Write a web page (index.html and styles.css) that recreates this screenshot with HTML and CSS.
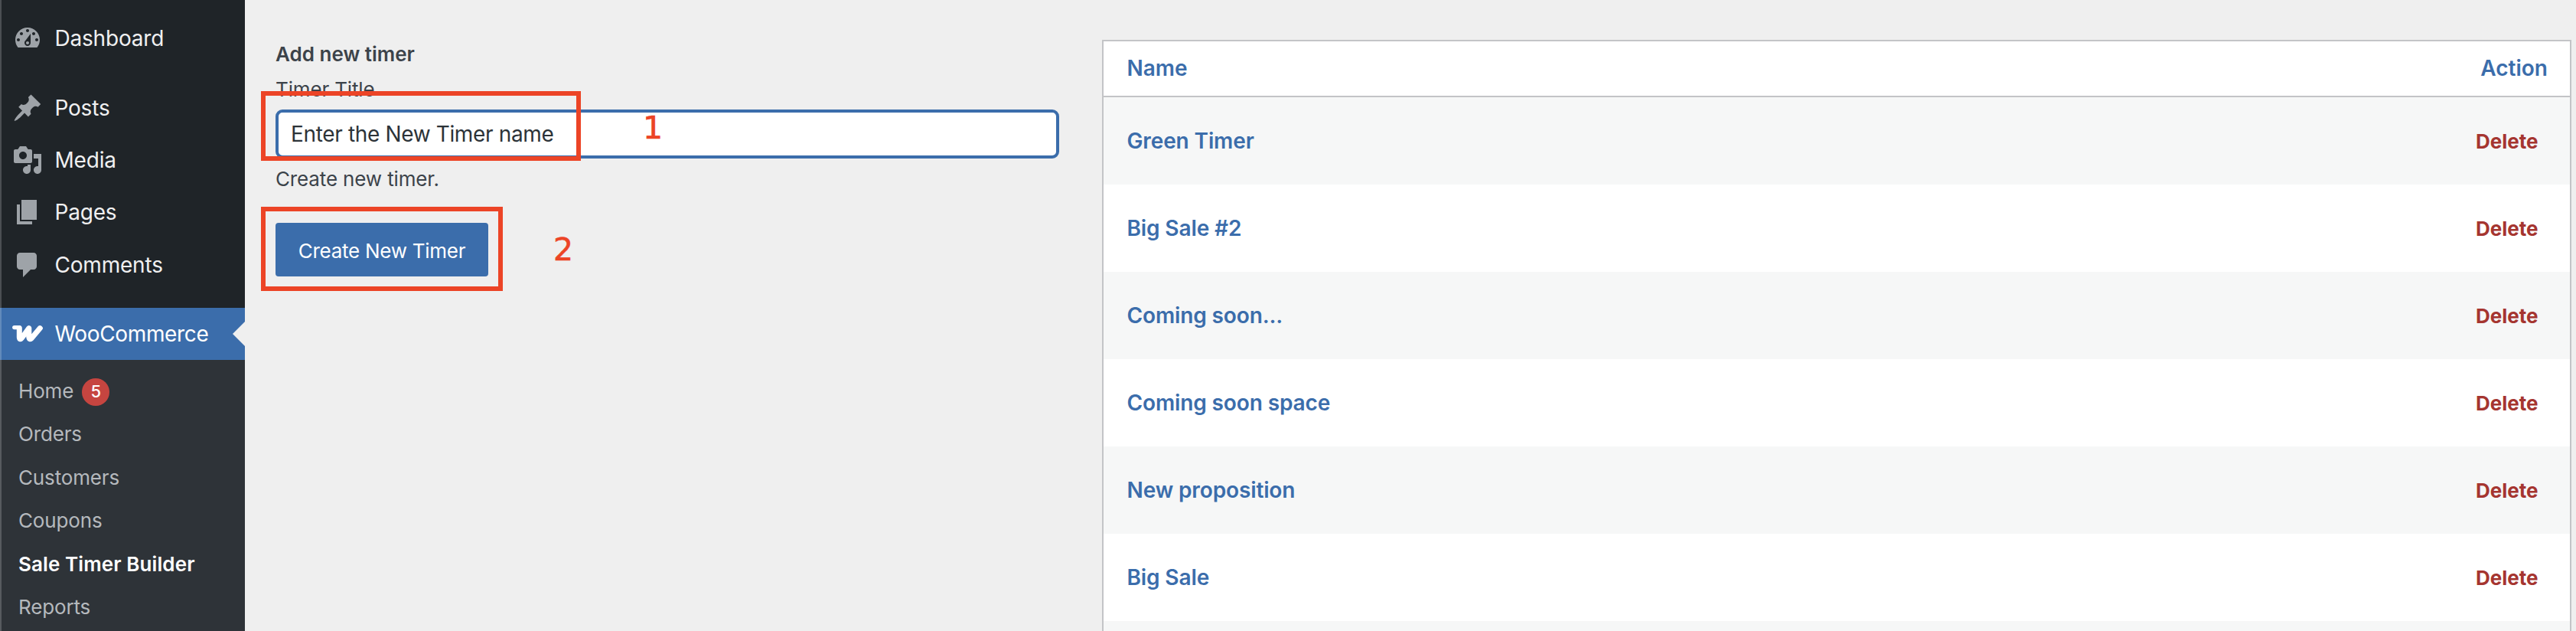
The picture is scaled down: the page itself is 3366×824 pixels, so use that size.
FILE: index.html
```html
<!DOCTYPE html>
<html lang="en">
<head>
    <meta charset="UTF-8">
    <meta name="viewport" content="width=device-width, initial-scale=1.0">
    <title>Sale Timer Builder</title>
    <link rel="stylesheet" href="styles.css">
</head>
<body>
    <aside class="sidebar">
        <ul class="menu">
            <li class="menu-item">
                <svg class="menu-icon" viewBox="0 0 20 20"><path d="M3.76 16h12.48c1.1-1.37 1.76-3.11 1.76-5 0-4.42-3.58-8-8-8s-8 3.58-8 8c0 1.89.66 3.63 1.76 5zM10 4c.55 0 1 .45 1 1s-.45 1-1 1-1-.45-1-1 .45-1 1-1zM6 6c.55 0 1 .45 1 1s-.45 1-1 1-1-.45-1-1 .45-1 1-1zm8 0c.55 0 1 .45 1 1s-.45 1-1 1-1-.45-1-1 .45-1 1-1zm-5.37 5.55L12 7v6c0 1.1-.9 2-2 2s-2-.9-2-2c0-.57.24-1.08.63-1.45zM4 10c.55 0 1 .45 1 1s-.45 1-1 1-1-.45-1-1 .45-1 1-1zm12 0c.55 0 1 .45 1 1s-.45 1-1 1-1-.45-1-1 .45-1 1-1zm-5 3c0-.55-.45-1-1-1s-1 .45-1 1 .45 1 1 1 1-.45 1-1z"/></svg>
                <span>Dashboard</span>
            </li>
            <li class="separator"></li>
            <li class="menu-item">
                <svg class="menu-icon" viewBox="0 0 20 20"><path d="M10.44 3.02l1.82-1.82 6.36 6.35-1.83 1.82c-1.05-.68-2.48-.57-3.41.36l-.75.75c-.92.93-1.04 2.35-.35 3.41l-1.83 1.82-2.41-2.41-2.8 2.79c-.42.42-3.38 2.71-3.8 2.29s1.86-3.39 2.28-3.81l2.79-2.79L4.1 9.36l1.83-1.82c1.05.69 2.48.57 3.4-.36l.75-.75c.93-.92 1.05-2.35.36-3.41z"/></svg>
                <span>Posts</span>
            </li>
            <li class="menu-item">
                <svg class="menu-icon" viewBox="0 0 20 20"><path d="M13 11V4c0-.55-.45-1-1-1h-1.67L9 1H5L3.67 3H2c-.55 0-1 .45-1 1v7c0 .55.45 1 1 1h10c.55 0 1-.45 1-1zM7 4.5c1.38 0 2.5 1.12 2.5 2.5S8.38 9.5 7 9.5 4.5 8.38 4.5 7 5.62 4.5 7 4.5zM14 6h5v10.5c0 1.38-1.12 2.5-2.5 2.5S14 17.88 14 16.5s1.12-2.5 2.5-2.5c.17 0 .34.02.5.05V9h-3V6zm-4 8.05V13h2v3.5c0 1.38-1.12 2.5-2.5 2.5S7 17.88 7 16.5 8.12 14 9.5 14c.17 0 .34.02.5.05z"/></svg>
                <span>Media</span>
            </li>
            <li class="menu-item">
                <svg class="menu-icon" viewBox="0 0 20 20"><path d="M6 15V2h10v13H6zm-1 1h8v2H3V5h2v11z"/></svg>
                <span>Pages</span>
            </li>
            <li class="menu-item">
                <svg class="menu-icon" viewBox="0 0 20 20"><path d="M5 2h9c1.1 0 2 .9 2 2v7c0 1.1-.9 2-2 2h-2l-5 5v-5H5c-1.1 0-2-.9-2-2V4c0-1.1.9-2 2-2z"/></svg>
                <span>Comments</span>
            </li>
            <li class="separator"></li>
            <li class="menu-item current">
                <svg class="menu-icon" viewBox="0 0 40 40">
                    <path class="woo woo-bar" d="M2.8 11.6H9"/>
                    <path class="woo" d="M9.3 12.6V24.5Q9.8 28.5 12.4 25.5L21.8 12.6V24.5Q22.6 28.5 25.4 25.5L36.3 12.6"/>
                </svg>
                <span>WooCommerce</span>
            </li>
        </ul>
        <ul class="submenu">
            <li>Home <span class="badge">5</span></li>
            <li>Orders</li>
            <li>Customers</li>
            <li>Coupons</li>
            <li class="active">Sale Timer Builder</li>
            <li>Reports</li>
        </ul>
    </aside>

    <main class="content">
        <form class="timer-form">
            <h2>Add new timer</h2>
            <label for="title">Timer Title</label>
            <input class="field" type="text" id="title" name="title" value="Enter the New Timer name">
            <p>Create new timer.</p>
            <button type="button">Create New Timer</button>
        </form>

        <div class="timers">
            <div class="row head"><span>Name</span><span>Action</span></div>
            <div class="row"><span class="name">Green Timer</span><span class="delete">Delete</span></div>
            <div class="row"><span class="name">Big Sale #2</span><span class="delete">Delete</span></div>
            <div class="row"><span class="name">Coming soon...</span><span class="delete">Delete</span></div>
            <div class="row"><span class="name">Coming soon space</span><span class="delete">Delete</span></div>
            <div class="row"><span class="name">New proposition</span><span class="delete">Delete</span></div>
            <div class="row"><span class="name">Big Sale</span><span class="delete">Delete</span></div>
            <div class="row"></div>
        </div>

        <!-- step marks over the form -->
        <div class="mark mark-field"></div>
        <span class="step step-one">1</span>
        <div class="mark mark-button"></div>
        <span class="step step-two">2</span>
    </main>
</body>
</html>
```
FILE: styles.css
```css
* {
    box-sizing: border-box;
}

body {
    margin: 0;
    height: 824px;
    display: flex;
    background: #efefef;
    color: #3c434a;
    font-family: Inter, sans-serif;
    font-size: 26px;
}

ul {
    list-style: none;
    margin: 0;
    padding: 0;
}

.sidebar {
    position: relative;
    display: flex;
    flex-direction: column;
    width: 320px;
    flex-shrink: 0;
    background: #1f2428;
}

/* light edge of the window */
.sidebar::before {
    content: "";
    position: absolute;
    z-index: 1;
    left: 0;
    top: 0;
    width: 2px;
    height: 100%;
    background: rgba(255, 255, 255, 0.2);
}

.menu {
    padding-top: 16px;
}

.menu-item {
    position: relative;
    display: flex;
    align-items: center;
    height: 68.4px;
    padding-left: 16px;
    color: #f0f0f1;
    font-size: 28px;
    letter-spacing: -0.2px;
}

.menu-icon {
    width: 40px;
    height: 40px;
    margin-right: 15.5px;
    fill: #9ea3a8;
}

.separator {
    height: 22px;
}

.current {
    background: #3b6dab;
    color: #fff;
    letter-spacing: -0.35px;
}

.current::after {
    content: "";
    position: absolute;
    right: 0;
    top: 18px;
    border: 16px solid transparent;
    border-right-color: #efefef;
    border-left-width: 0;
}

.woo {
    fill: none;
    stroke: #fff;
    stroke-width: 7;
    stroke-linecap: round;
    stroke-linejoin: round;
}

.woo-bar {
    stroke-width: 5.4;
}

.submenu {
    flex: 1;
    padding-top: 12px;
    background: #2e3338;
    color: #b5b9bd;
}

.submenu li {
    display: flex;
    align-items: center;
    height: 56.4px;
    padding-left: 24px;
    letter-spacing: -0.15px;
}

.submenu .active {
    color: #fff;
    font-weight: 600;
    letter-spacing: 0.1px;
}

.badge {
    width: 36px;
    height: 36px;
    margin: 2px 0 0 11px;
    border-radius: 50%;
    background: #c64540;
    color: #fff;
    font-size: 22px;
    font-weight: 500;
    line-height: 35px;
    text-align: center;
}

.content {
    position: relative;
    flex: 1;
    display: flex;
    align-items: flex-start;
    justify-content: space-between;
    padding: 52px 6px 0 40px;
}

.timer-form {
    width: 1024px;
}

.timer-form h2,
.timer-form p {
    margin: 0;
    font-size: 26px;
    line-height: 38px;
}

.timer-form h2 {
    font-weight: 600;
}

.timer-form label {
    display: block;
    padding-top: 8px;
    line-height: 38px;
    letter-spacing: -0.15px;
}

.field {
    display: block;
    width: 100%;
    height: 64px;
    margin: 7px 0 0;
    padding: 0 16px;
    border: 4px solid #3b6dab;
    border-radius: 9px;
    background: #fff;
    color: #2c3338;
    font-family: Inter, sans-serif;
    font-size: 28px;
    letter-spacing: -0.35px;
}

.timer-form p {
    padding-top: 8px;
    letter-spacing: -0.14px;
}

.timer-form button {
    display: block;
    width: 278px;
    height: 70px;
    margin-top: 38px;
    padding: 2px 0 0;
    border: 0;
    border-radius: 4px;
    background: #3b6dab;
    color: #fff;
    font: 26px Inter, sans-serif;
    letter-spacing: -0.27px;
}

.mark {
    position: absolute;
    border: 6px solid #ec4426;
}

.mark-field {
    left: 21px;
    top: 119px;
    width: 418px;
    height: 91px;
}

.mark-button {
    left: 21px;
    top: 270px;
    width: 316px;
    height: 110px;
}

.step {
    position: absolute;
    color: #ec4426;
    font: 41px/48px "DejaVu Sans", sans-serif;
    -webkit-text-stroke: 0.6px #ec4426;
}

.step-one {
    left: 520px;
    top: 143px;
}

.step-two {
    left: 403px;
    top: 302px;
}

.timers {
    width: 1920px;
    height: 772px;
    overflow: hidden;
    border: 2px solid #c3c4c7;
    border-bottom: 0;
    background: #fff;
}

.row {
    display: flex;
    align-items: center;
    justify-content: space-between;
    height: 114px;
    padding: 0 41.5px 0 30.5px;
    font-weight: 600;
}

.row:nth-child(even) {
    background: #f6f7f7;
}

.head {
    height: 73px;
    padding-right: 29px;
    padding-bottom: 1px;
    border-bottom: 2px solid #c3c4c7;
    color: #3b6dab;
    font-size: 28px;
}

.name {
    color: #3b6dab;
    font-size: 28px;
    letter-spacing: -0.12px;
}

.delete {
    color: #a53530;
    font-weight: 700;
}
```
